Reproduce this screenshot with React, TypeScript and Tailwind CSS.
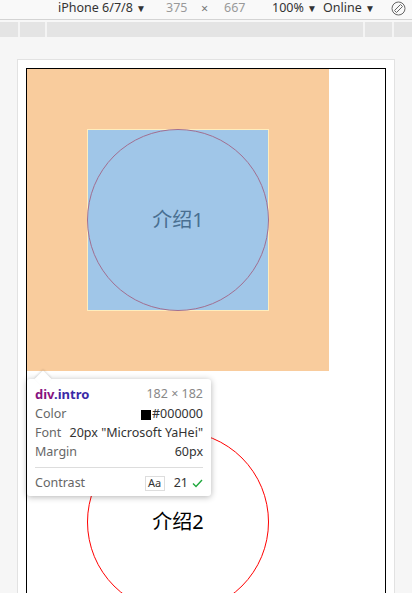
export default function App() {
  const ui = { fontFamily: '"Noto Sans", "Open Sans", sans-serif' };
  const cjk = { fontFamily: '"Noto Sans", "Noto Sans CJK SC", sans-serif' };

  return (
    <div className="relative w-[412px] h-[593px] overflow-hidden bg-[#f6f6f6] flex flex-col" style={ui}>
      {/* device toolbar */}
      <div className="h-[20px] shrink-0 bg-[#f9f9f9] border-b border-[#d4d4d4] flex items-start pt-[1px] pl-[58px] text-[12.5px] text-[#333] leading-[13px]">
        <span className="w-[108px]">iPhone 6/7/8 <span className="text-[10px]">▼</span></span>
        <span className="w-[35px] text-[#999]">375</span>
        <span className="w-[23px] text-[#777] pt-[1px]">×</span>
        <span className="w-[48px] text-[#999]">667</span>
        <span className="w-[51px]">100% <span className="text-[10px]">▼</span></span>
        <span className="w-[68px]">Online <span className="text-[10px]">▼</span></span>
        <svg width="15" height="15" viewBox="0 0 15 15" fill="none" stroke="#666" strokeWidth="1">
          <circle cx="7.5" cy="7.5" r="6.5" />
          <path d="M3.5 9.5 L9.5 3.5 M5.5 11.5 L11.5 5.5 M3.5 9.5 L5.5 11.5 M9.5 3.5 L11.5 5.5" />
        </svg>
      </div>
      <div className="h-[2px] shrink-0 bg-[#f7f7f7]" />
      {/* ruler */}
      <div className="h-[15px] shrink-0 bg-[#e4e4e4] flex">
        <div className="w-[18px]" />
        <div className="w-[2px] bg-[#f4f4f4]" />
        <div className="w-[25px]" />
        <div className="w-[2px] bg-[#f4f4f4]" />
        <div className="flex-1" />
        <div className="w-[2px] bg-[#f4f4f4]" />
        <div className="w-[27px]" />
        <div className="w-[2px] bg-[#f4f4f4]" />
        <div className="w-[18px]" />
      </div>

      {/* emulated page */}
      <div className="flex-1 pt-[22px] pl-[17px]">
        <div className="w-[378px] h-[600px] bg-white border border-[#e2e2e2] px-[8px] pt-[8px]">
          <div className="w-[360px] h-[600px] border border-black" style={cjk}>
            {/* margin highlight */}
            <div className="w-[302px] h-[302px] bg-[#f9cc9d] p-[60px]">
              <div className="w-[182px] h-[182px] border border-[#ffedbc] bg-[#a0c6e8]">
                <div className="w-[182px] h-[182px] -m-px rounded-full border border-[#a06f91] flex items-center justify-center text-[20px] text-[#496f91]">
                  介绍1
                </div>
              </div>
            </div>
            <div className="mt-[60px] ml-[60px] w-[182px] h-[182px] rounded-full border border-[#ff0000] flex items-center justify-center text-[20px] text-black">
              介绍2
            </div>
          </div>
        </div>
      </div>

      {/* inspect tooltip */}
      <div className="absolute left-[27px] top-[379px] w-[184px] bg-white rounded-[3px] shadow-[0_1px_6px_rgba(0,0,0,0.3)] px-[8px] pt-[5px] pb-[3px] text-[12.5px]">
        <div className="absolute -top-[6px] left-[10px] w-[12px] h-[12px] rotate-45 bg-white shadow-[-1px_-1px_2px_rgba(0,0,0,0.12)]" />
        <div className="relative h-[21px] flex items-center justify-between">
          <span className="font-bold text-[13px]">
            <span className="text-[#881280]">div</span>
            <span className="text-[#3a2aa6]">.intro</span>
          </span>
          <span className="text-[#888]">182 × 182</span>
        </div>
        <div className="h-[19px] flex items-center justify-between">
          <span className="text-[#666]">Color</span>
          <span className="flex items-center text-[#333]">
            <span className="w-[10px] h-[10px] bg-black mr-px" />#000000
          </span>
        </div>
        <div className="h-[19px] flex items-center justify-between">
          <span className="text-[#666]">Font</span>
          <span className="text-[#333]">20px "Microsoft YaHei"</span>
        </div>
        <div className="h-[19px] flex items-center justify-between">
          <span className="text-[#666]">Margin</span>
          <span className="text-[#333]">60px</span>
        </div>
        <div className="mt-[5px] border-t border-[#ddd] pt-[5px] h-[26px] flex items-center justify-between">
          <span className="text-[#666]">Contrast</span>
          <span className="flex items-center text-[#333]">
            <span className="w-[20px] h-[15px] border border-[#ddd] flex items-center justify-center text-[11px] mr-[9px]">Aa</span>
            21
            <svg className="ml-[4px]" width="11" height="9" viewBox="0 0 11 9" fill="none" stroke="#1ea83c" strokeWidth="1.4">
              <path d="M1 4.5 L4 7.5 L10 1" />
            </svg>
          </span>
        </div>
      </div>
    </div>
  );
}
